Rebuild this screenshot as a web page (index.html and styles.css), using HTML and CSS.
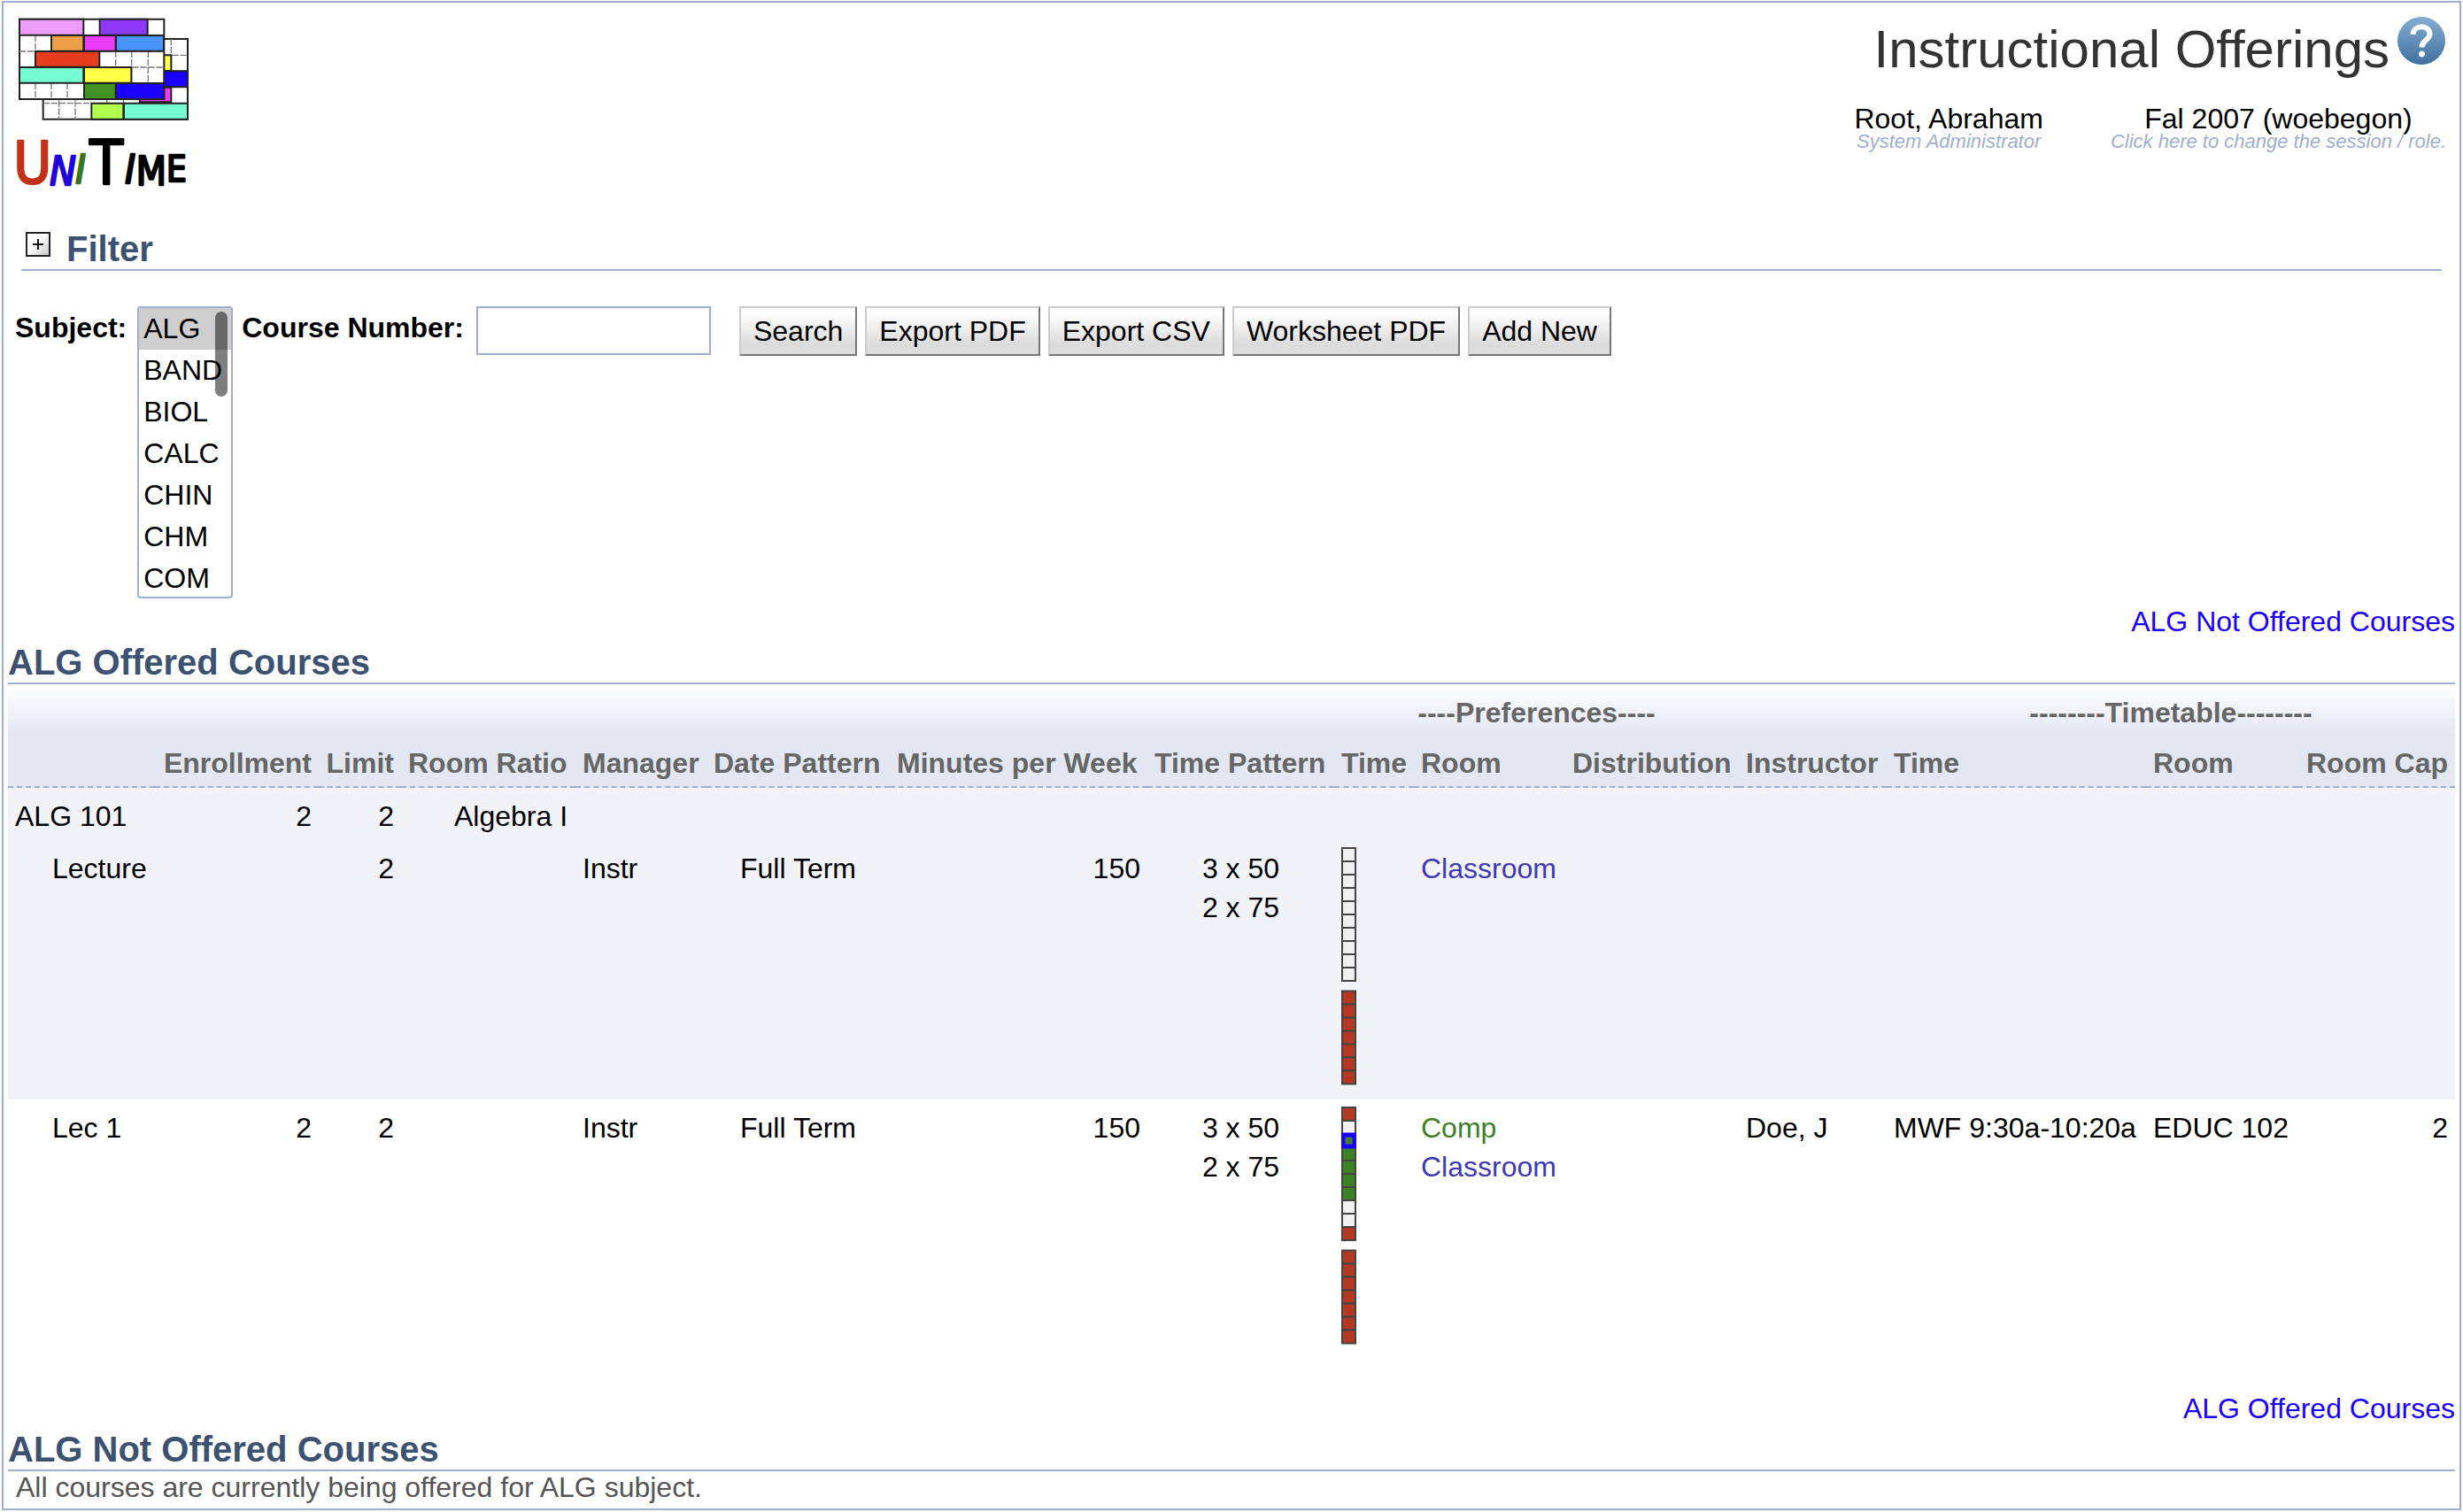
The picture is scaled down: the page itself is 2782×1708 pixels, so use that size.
FILE: index.html
```html
<!DOCTYPE html>
<html lang="en">
<head>
<meta charset="utf-8">
<title>Instructional Offerings</title>
<link rel="stylesheet" href="styles.css">
</head>
<body>
<svg class="defs" width="0" height="0" aria-hidden="true">
  <defs>
    <linearGradient id="ball" x1="0" y1="0" x2="0" y2="1"><stop offset="0" stop-color="#84add0"/><stop offset="1" stop-color="#40709f"/></linearGradient>
    <linearGradient id="plus" x1="0" y1="0" x2="1" y2="1"><stop offset=".4" stop-color="#fff"/><stop offset="1" stop-color="#c8c8c8"/></linearGradient>
    <g id="cell"><rect x="1" y="1" width="15" height="15" stroke="#444" stroke-width="2"/></g>
    <g id="seven" fill="#b53822">
      <use href="#cell"/><use href="#cell" y="15"/><use href="#cell" y="30"/><use href="#cell" y="45"/><use href="#cell" y="60"/><use href="#cell" y="75"/><use href="#cell" y="90"/>
    </g>
  </defs>
</svg>
<div class="page">
  <header class="header">
    <svg class="logo" viewBox="48 48 600 600" role="img" aria-label="UniTime">
      <g stroke="#222" stroke-width="6">
        <path fill="#fff" d="M146 132H636V404H146Z"/>
        <path fill="none" stroke="#777" stroke-width="4" stroke-dasharray="22 5" d="M146 350H636M200 340V404M255 340V404M362 336V350M418 336V350M580 132V346M556 187H636"/>
        <path fill="#ffff54" d="M550 187H580V240H550Z"/>
        <path fill="#1c00ff" d="M550 241H636V295H550Z"/>
        <path fill="#ea3cf7" d="M474 296H580V346H474Z"/>
        <path fill="#b2ff4f" d="M310 350H418V404H310Z"/>
        <path fill="#75fbd0" d="M420 350H636V404H420Z"/>
        <path fill="#fff" d="M66 65H556V336H66Z"/>
        <path fill="none" stroke="#777" stroke-width="4" stroke-dasharray="22 5" d="M66 174H556M340 228H556M120 120V174M120 282V336M174 282V336M228 282V336M392 174V228M446 174V282M502 174V282"/>
        <path fill="#ee9cfa" d="M66 65H283V119H66Z"/>
        <path fill="#8d39f7" d="M338 65H500V119H338Z"/>
        <path fill="#ee9f47" d="M174 120H283V173H174Z"/>
        <path fill="#ea3cf7" d="M285 120H392V173H285Z"/>
        <path fill="#4a94f8" d="M393 120H555V173H393Z"/>
        <path fill="#e63d1f" d="M120 174H337V227H120Z"/>
        <path fill="#75fbd0" d="M66 228H283V281H66Z"/>
        <path fill="#ffff45" d="M285 228H445V281H285Z"/>
        <path fill="#439322" d="M285 282H392V336H285Z"/>
        <path fill="#1c00ff" d="M393 282H556V336H393Z"/>
      </g>
      <g class="wordmark">
        <text x="46" y="622" font-size="196" fill="#c0331b" stroke="#c0331b">U</text>
        <text x="169" y="626" font-size="132" fill="#2105d8" stroke="#2105d8" font-style="italic">N</text>
        <text x="256" y="620" font-size="132" fill="#39751f" stroke="#39751f" font-style="italic">I</text>
        <text x="304" y="624" font-size="206" stroke="#000">T</text>
        <text x="424" y="620" font-size="132" stroke="#000" font-style="italic">I</text>
        <text x="461" y="626" font-size="132" stroke="#000">M</text>
        <text x="564" y="616" font-size="120" stroke="#000">E</text>
      </g>
    </svg>
    <div class="heading">
      <div class="title-row">
        <h1 class="title">Instructional Offerings</h1>
        <a class="help" href="#help" aria-label="Help">
          <svg width="56" height="56" viewBox="0 0 56 56"><circle cx="28" cy="28" r="27" fill="url(#ball)"/><path d="M18.500 21C19 9.500 37.500 9.500 37.500 20.500C37.500 27.500 28.500 27 28.500 35.500" fill="none" stroke="#fff" stroke-width="6"/><circle cx="28.500" cy="43" r="3.500" fill="#fff"/></svg>
        </a>
      </div>
      <div class="session">
        <a class="info" href="#user"><span>Root, Abraham</span><em>System Administrator</em></a>
        <a class="info" href="#session"><span>Fal 2007 (woebegon)</span><em>Click here to change the session / role.</em></a>
      </div>
    </div>
  </header>

  <div class="filter-bar">
    <button class="expand" type="button" aria-label="Expand filter">
      <svg width="28" height="28" viewBox="0 0 28 28"><rect x="1" y="1" width="26" height="26" fill="url(#plus)" stroke="#222" stroke-width="2"/><path d="M8 14H20M14 8V20" stroke="#111" stroke-width="2"/></svg>
    </button>
    <h2 class="heading2">Filter</h2>
  </div>

  <form class="search">
    <label for="subject">Subject:</label>
    <div class="subject-box">
      <select id="subject" class="subject" multiple size="7">
        <option selected>ALG</option><option>BAND</option><option>BIOL</option><option>CALC</option><option>CHIN</option><option>CHM</option><option>COM</option>
      </select>
      <span class="thumb"></span>
    </div>
    <label for="course">Course Number:</label>
    <input id="course" class="course" type="text">
    <div class="buttons">
      <button type="button">Search</button>
      <button type="button">Export PDF</button>
      <button type="button">Export CSV</button>
      <button type="button">Worksheet PDF</button>
      <button type="button">Add New</button>
    </div>
  </form>

  <section>
    <a class="jump" href="#not-offered">ALG Not Offered Courses</a>
    <h2 class="heading2 ruled" id="offered">ALG Offered Courses</h2>
    <table class="offerings">
      <colgroup>
        <col class="c-name"><col class="c-enrl"><col class="c-limit"><col class="c-ratio"><col class="c-manager"><col class="c-date"><col class="c-minutes"><col class="c-pattern"><col class="c-time"><col class="c-room"><col class="c-dist"><col class="c-instr"><col class="c-assigned"><col class="c-room"><col>
      </colgroup>
      <thead>
        <tr><th colspan="8"></th><th class="mid" colspan="3">----Preferences----</th><th></th><th class="mid" colspan="3">--------Timetable--------</th></tr>
        <tr class="names"><th></th><th class="num">Enrollment</th><th class="num">Limit</th><th>Room Ratio</th><th>Manager</th><th>Date Pattern</th><th>Minutes per Week</th><th>Time Pattern</th><th>Time</th><th>Room</th><th>Distribution</th><th>Instructor</th><th>Time</th><th>Room</th><th class="num">Room Cap</th></tr>
      </thead>
      <tbody>
        <tr class="shade"><td>ALG 101</td><td class="num">2</td><td class="num">2</td><td class="course-title" colspan="12">Algebra I</td></tr>
        <tr class="shade">
          <td class="indent">Lecture</td><td></td><td class="num">2</td><td></td><td>Instr</td><td class="mid">Full Term</td><td class="num">150</td><td class="mid">3 x 50<br>2 x 75</td>
          <td class="grids">
            <svg width="17" height="152" viewBox="0 0 17 152" fill="#f0f0f0"><use href="#cell"/><use href="#cell" y="15"/><use href="#cell" y="30"/><use href="#cell" y="45"/><use href="#cell" y="60"/><use href="#cell" y="75"/><use href="#cell" y="90"/><use href="#cell" y="105"/><use href="#cell" y="120"/><use href="#cell" y="135"/></svg>
            <svg width="17" height="108" viewBox="0 0 17 107"><use href="#seven"/></svg>
          </td>
          <td class="preferred">Classroom</td><td></td><td></td><td></td><td></td><td></td>
        </tr>
        <tr>
          <td class="indent">Lec 1</td><td class="num">2</td><td class="num">2</td><td></td><td>Instr</td><td class="mid">Full Term</td><td class="num">150</td><td class="mid">3 x 50<br>2 x 75</td>
          <td class="grids">
            <svg width="17" height="152" viewBox="0 0 17 152" fill="#3c8028"><use href="#cell" fill="#b53822"/><use href="#cell" y="15" fill="#f0f0f0"/><use href="#cell" y="45"/><use href="#cell" y="60"/><use href="#cell" y="75"/><use href="#cell" y="90"/><use href="#cell" y="105" fill="#f0f0f0"/><use href="#cell" y="120" fill="#f0f0f0"/><use href="#cell" y="135" fill="#b53822"/><rect x="2" y="32" width="13" height="13" stroke="#1c00ff" stroke-width="5"/></svg>
            <svg width="17" height="108" viewBox="0 0 17 107"><use href="#seven"/></svg>
          </td>
          <td><span class="strong">Comp</span><br><span class="preferred">Classroom</span></td><td></td><td>Doe, J</td><td>MWF 9:30a-10:20a</td><td>EDUC 102</td><td class="num">2</td>
        </tr>
      </tbody>
    </table>
  </section>

  <section class="not-offered">
    <a class="jump" href="#offered">ALG Offered Courses</a>
    <h2 class="heading2 ruled" id="not-offered">ALG Not Offered Courses</h2>
    <p class="message">All courses are currently being offered for ALG subject.</p>
  </section>
</div>
</body>
</html>
```
FILE: styles.css
```css
* { box-sizing: border-box; }

body {
  margin: 1px 2px 3px;
  background: #fff;
  color: #000;
  font: 32px/36px "Liberation Sans", Arial, Helvetica, sans-serif;
}

a { text-decoration: none; }
h1, h2, p { margin: 0; }
svg { display: block; }
.defs { position: absolute; }

.page {
  border: 2px solid #a0aecf;
  padding: 0 5px 6px;
}

/* Header */
.header {
  display: flex;
  justify-content: space-between;
  align-items: flex-start;
  padding: 13px 7px 0;
}
.logo { width: 200px; height: 200px; overflow: visible; }
.wordmark {
  font-family: "DejaVu Sans Condensed", "DejaVu Sans", sans-serif;
  stroke-width: 7px;
  stroke-linejoin: round;
}
.heading { padding-top: 6px; }
.title-row {
  display: flex;
  justify-content: flex-end;
  gap: 8px;
  padding-right: 3px;
}
.title {
  color: #333;
  font-size: 60px;
  line-height: 68px;
  font-weight: 400;
}
.help { margin-top: -4px; }
.session {
  display: flex;
  justify-content: flex-end;
  gap: 76px;
  margin-top: 30px;
  padding-right: 3px;
}
.info {
  display: flex;
  flex-direction: column;
  align-items: center;
  color: #000;
  line-height: 28px;
}
.info em {
  color: #a0aecf;
  font-size: 22px;
  line-height: 24px;
}

/* Section titles */
.heading2 {
  color: #3d5170;
  font-size: 40px;
  line-height: 46px;
  font-weight: 700;
}
.ruled {
  margin-top: 5px;
  border-bottom: 2px solid #a0aecf;
}
.filter-bar {
  display: flex;
  gap: 18px;
  margin: 42px 15px 40px;
  padding-left: 5px;
  border-bottom: 2px solid #a0aecf;
}
.expand {
  align-self: flex-start;
  margin-top: 4px;
  border: 0;
  padding: 0;
  background: none;
}

/* Filter form */
.search {
  display: flex;
  align-items: flex-start;
  padding-left: 8px;
}
.search label {
  padding-top: 6px;
  font-weight: 700;
}
.subject-box {
  position: relative;
  margin: 0 10px 0 12px;
}
.subject {
  display: block;
  width: 108px;
  height: 330px;
  border: 2px solid #a0aecf;
  border-radius: 4px;
  padding: 0;
  overflow: hidden;
  background: #fff;
  font: inherit;
  outline: 0;
}
.subject option {
  min-height: 0;
  padding: 5px 0 5px 5px;
  line-height: 36px;
  color: #000;
}
.subject option:checked { background: #cecece; }
.thumb {
  position: absolute;
  top: 6px;
  right: 6px;
  width: 14px;
  height: 96px;
  border-radius: 7px;
  background: rgba(0, 0, 0, .5);
}
.course {
  width: 265px;
  height: 55px;
  margin: 0 32px 0 14px;
  border: 2px solid #a0aecf;
  padding: 0 6px;
  font: inherit;
}
.buttons {
  display: flex;
  gap: 9px;
}
.buttons button {
  height: 56px;
  border: 2px solid;
  border-color: #ccc #777 #777 #ccc;
  padding: 0 14px;
  background: linear-gradient(#fff 10%, #ddd 75%);
  color: #000;
  font: inherit;
}

.jump {
  display: block;
  margin-top: 8px;
  color: #1c00ff;
  text-align: right;
}

/* Offerings table */
.offerings {
  width: 100%;
  table-layout: fixed;
  border-collapse: separate;
  border-spacing: 0;
}
.c-name { width: 166px; }
.c-enrl { width: 185px; }
.c-limit { width: 93px; }
.c-ratio { width: 197px; }
.c-manager { width: 148px; }
.c-date { width: 207px; }
.c-minutes { width: 291px; }
.c-pattern { width: 211px; }
.c-time { width: 90px; }
.c-room { width: 171px; }
.c-dist { width: 196px; }
.c-instr { width: 167px; }
.c-assigned { width: 293px; }

.offerings thead { background: linear-gradient(#fff, #e3e7f2 57px); }
.offerings th {
  padding: 10px 0 3px 8px;
  color: #666;
  line-height: 44px;
  font-weight: 700;
  text-align: left;
  white-space: nowrap;
}
.offerings .names th {
  border-bottom: 2px dashed #a0aecf;
  padding-bottom: 4px;
}
.offerings td {
  padding: 10px 0 5px 8px;
  line-height: 44px;
  vertical-align: top;
  white-space: nowrap;
}
.shade { background: #f1f3f8; }
.offerings .num {
  padding-right: 8px;
  text-align: right;
}
.offerings .mid {
  padding-right: 8px;
  text-align: center;
}
.offerings .indent { padding-left: 50px; }
.offerings .course-title { padding-left: 60px; }
.offerings .grids { padding: 8px 0 16px 8px; }
.grids svg + svg { margin-top: 9px; }
.preferred { color: #4039b5; }
.strong { color: #3c8028; }

.not-offered { padding-top: 38px; }
.not-offered .jump { margin-top: 0; }
.message {
  padding-left: 9px;
  color: #555;
}
```
